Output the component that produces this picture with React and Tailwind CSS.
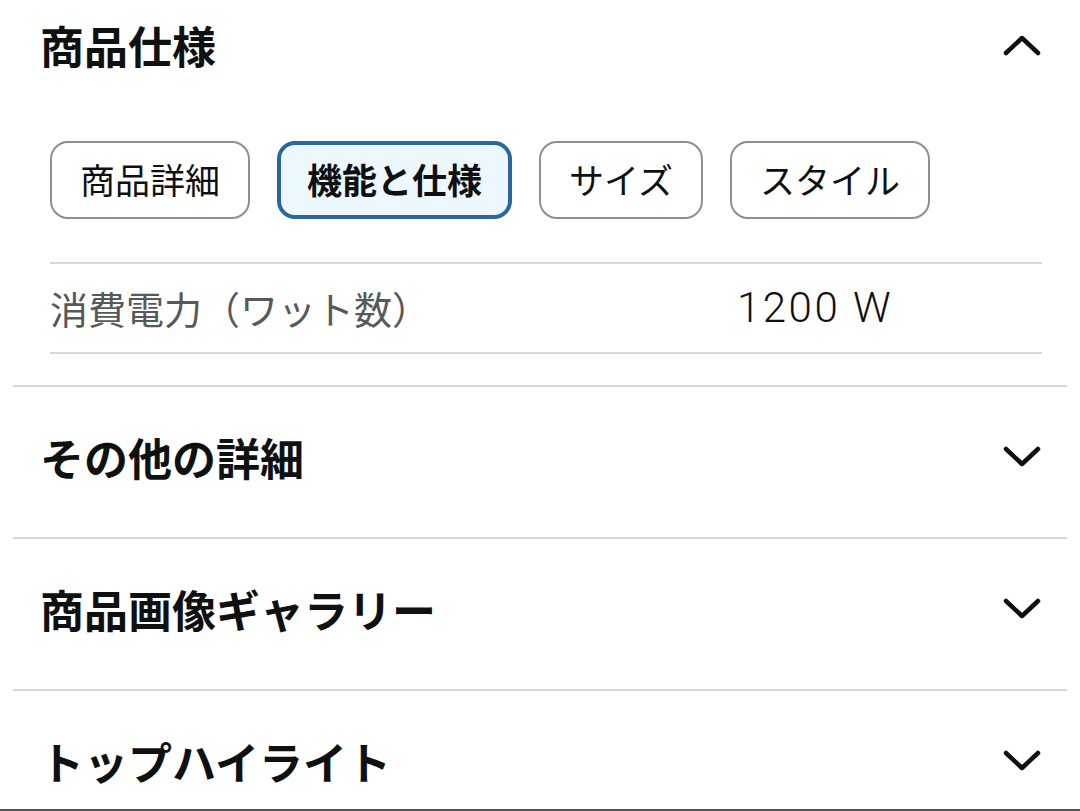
import React from "react";

const font = { fontFamily: '"Noto Sans CJK JP", "Noto Sans", sans-serif' };

function Chevron({ up }) {
  return (
    <svg width="40" height="24" viewBox="0 0 40 24" fill="none" className="shrink-0">
      <path
        d={up ? "M4 20 L20 5 L36 20" : "M4 4 L20 19 L36 4"}
        stroke="#0f1111"
        strokeWidth="4.5"
        strokeLinecap="round"
        strokeLinejoin="round"
      />
    </svg>
  );
}

const tabs = ["商品詳細", "機能と仕様", "サイズ", "スタイル"];

function Collapsed({ title }) {
  return (
    <section className="mx-[13px] border-b-2 border-[#d5d9d9] pb-[10px]">
      <div className="h-[140px] flex items-center justify-between pl-[27px] pr-[25px]">
        <h2 className="text-[44px] font-bold text-[#0f1111] leading-none">{title}</h2>
        <Chevron />
      </div>
    </section>
  );
}

export default function App() {
  return (
    <div className="w-[1080px] h-[811px] overflow-hidden bg-white border-b-2 border-[#555]" style={font}>
      {/* 商品仕様 (open) */}
      <section className="mx-[13px] border-b-2 border-[#d5d9d9] pb-[31px]">
        <div className="h-[90px] flex items-center justify-between pl-[27px] pr-[25px]">
          <h2 className="text-[44px] font-bold text-[#0f1111] leading-none">商品仕様</h2>
          <Chevron up />
        </div>
        <div className="pl-[37px] pr-[25px]">
          <div className="mt-[51px] flex gap-[27px]">
            {tabs.map((t, i) =>
              i === 1 ? (
                <button
                  key={t}
                  className="h-[78px] px-[26px] pb-[4px] rounded-[18px] border-4 border-[#2a66a0] bg-[#edf7fe] text-[35px] font-bold text-[#0f1111] leading-none"
                >
                  {t}
                </button>
              ) : (
                <button
                  key={t}
                  className="h-[78px] px-[28px] pb-[4px] rounded-[18px] border-2 border-[#8d9090] bg-white text-[35px] text-[#0f1111] leading-none"
                >
                  {t}
                </button>
              )
            )}
          </div>
          <div className="mt-[43px] border-y-2 border-[#d5d9d9] h-[92px] flex items-center">
            <div className="w-[687px] text-[38px] text-[#565959] leading-none">消費電力（ワット数）</div>
            <div
              className="text-[42px] font-light tracking-[2.5px] text-[#0f1111] leading-none"
              style={{ fontFamily: 'Roboto, "Noto Sans", sans-serif' }}
            >
              1200 W
            </div>
          </div>
        </div>
      </section>

      <Collapsed title="その他の詳細" />
      <Collapsed title="商品画像ギャラリー" />
      <Collapsed title="トップハイライト" />
    </div>
  );
}
